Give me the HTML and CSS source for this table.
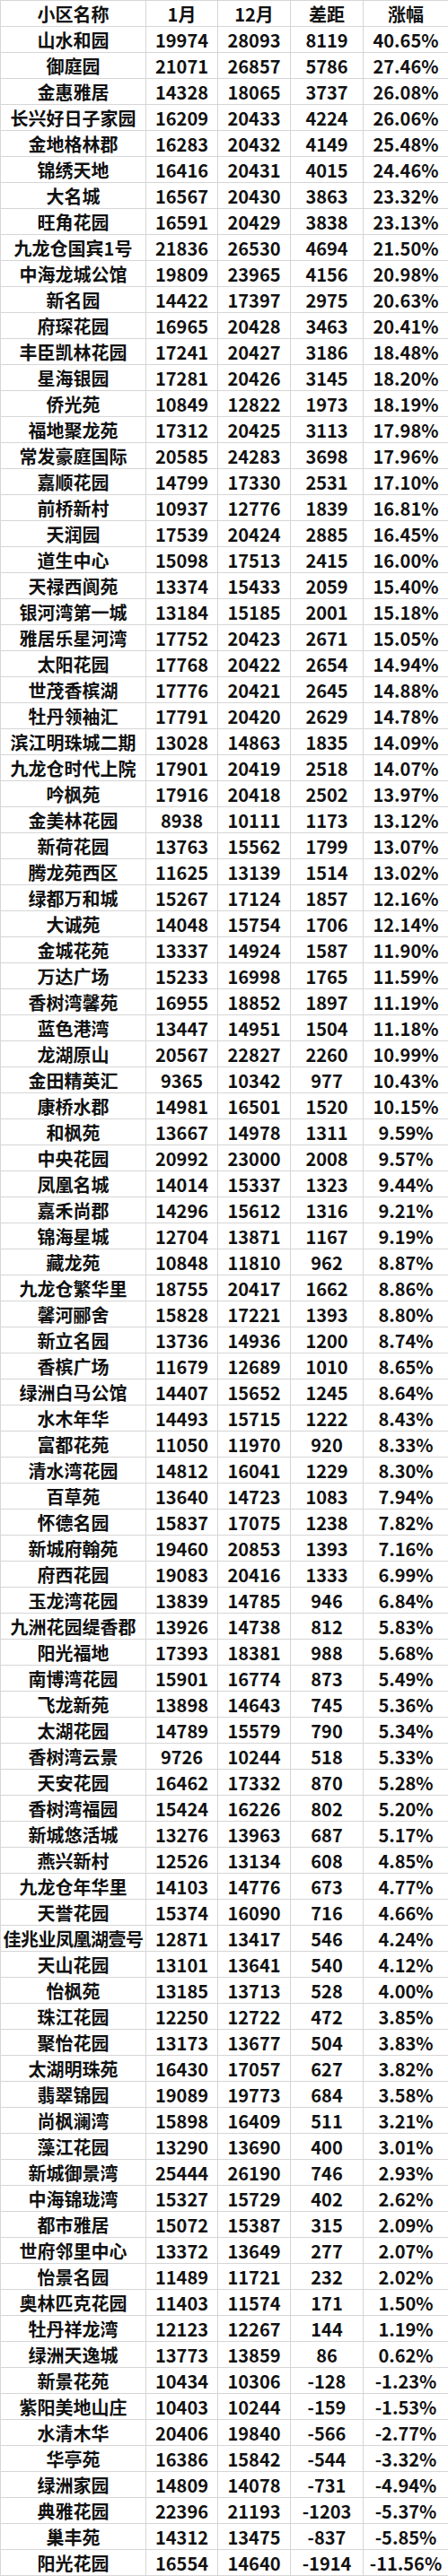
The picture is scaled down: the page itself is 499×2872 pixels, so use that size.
FILE: index.html
```html
<!DOCTYPE html>
<html lang="zh-CN">
<head>
<meta charset="utf-8">
<title>小区房价涨幅</title>
<link rel="stylesheet" href="styles.css">
</head>
<body>
<table class="sheet">
<colgroup>
<col class="c-name"><col class="c-num"><col class="c-num2"><col class="c-diff"><col class="c-pct">
</colgroup>
<thead>
<tr><th>小区名称</th><th>1月</th><th>12月</th><th>差距</th><th>涨幅</th></tr>
</thead>
<tbody>
<tr><td>山水和园</td><td>19974</td><td>28093</td><td>8119</td><td>40.65%</td></tr>
<tr><td>御庭园</td><td>21071</td><td>26857</td><td>5786</td><td>27.46%</td></tr>
<tr><td>金惠雅居</td><td>14328</td><td>18065</td><td>3737</td><td>26.08%</td></tr>
<tr><td>长兴好日子家园</td><td>16209</td><td>20433</td><td>4224</td><td>26.06%</td></tr>
<tr><td>金地格林郡</td><td>16283</td><td>20432</td><td>4149</td><td>25.48%</td></tr>
<tr><td>锦绣天地</td><td>16416</td><td>20431</td><td>4015</td><td>24.46%</td></tr>
<tr><td>大名城</td><td>16567</td><td>20430</td><td>3863</td><td>23.32%</td></tr>
<tr><td>旺角花园</td><td>16591</td><td>20429</td><td>3838</td><td>23.13%</td></tr>
<tr><td>九龙仓国宾1号</td><td>21836</td><td>26530</td><td>4694</td><td>21.50%</td></tr>
<tr><td>中海龙城公馆</td><td>19809</td><td>23965</td><td>4156</td><td>20.98%</td></tr>
<tr><td>新名园</td><td>14422</td><td>17397</td><td>2975</td><td>20.63%</td></tr>
<tr><td>府琛花园</td><td>16965</td><td>20428</td><td>3463</td><td>20.41%</td></tr>
<tr><td>丰臣凯林花园</td><td>17241</td><td>20427</td><td>3186</td><td>18.48%</td></tr>
<tr><td>星海银园</td><td>17281</td><td>20426</td><td>3145</td><td>18.20%</td></tr>
<tr><td>侨光苑</td><td>10849</td><td>12822</td><td>1973</td><td>18.19%</td></tr>
<tr><td>福地聚龙苑</td><td>17312</td><td>20425</td><td>3113</td><td>17.98%</td></tr>
<tr><td>常发豪庭国际</td><td>20585</td><td>24283</td><td>3698</td><td>17.96%</td></tr>
<tr><td>嘉顺花园</td><td>14799</td><td>17330</td><td>2531</td><td>17.10%</td></tr>
<tr><td>前桥新村</td><td>10937</td><td>12776</td><td>1839</td><td>16.81%</td></tr>
<tr><td>天润园</td><td>17539</td><td>20424</td><td>2885</td><td>16.45%</td></tr>
<tr><td>道生中心</td><td>15098</td><td>17513</td><td>2415</td><td>16.00%</td></tr>
<tr><td>天禄西阆苑</td><td>13374</td><td>15433</td><td>2059</td><td>15.40%</td></tr>
<tr><td>银河湾第一城</td><td>13184</td><td>15185</td><td>2001</td><td>15.18%</td></tr>
<tr><td>雅居乐星河湾</td><td>17752</td><td>20423</td><td>2671</td><td>15.05%</td></tr>
<tr><td>太阳花园</td><td>17768</td><td>20422</td><td>2654</td><td>14.94%</td></tr>
<tr><td>世茂香槟湖</td><td>17776</td><td>20421</td><td>2645</td><td>14.88%</td></tr>
<tr><td>牡丹领袖汇</td><td>17791</td><td>20420</td><td>2629</td><td>14.78%</td></tr>
<tr><td>滨江明珠城二期</td><td>13028</td><td>14863</td><td>1835</td><td>14.09%</td></tr>
<tr><td>九龙仓时代上院</td><td>17901</td><td>20419</td><td>2518</td><td>14.07%</td></tr>
<tr><td>吟枫苑</td><td>17916</td><td>20418</td><td>2502</td><td>13.97%</td></tr>
<tr><td>金美林花园</td><td>8938</td><td>10111</td><td>1173</td><td>13.12%</td></tr>
<tr><td>新荷花园</td><td>13763</td><td>15562</td><td>1799</td><td>13.07%</td></tr>
<tr><td>腾龙苑西区</td><td>11625</td><td>13139</td><td>1514</td><td>13.02%</td></tr>
<tr><td>绿都万和城</td><td>15267</td><td>17124</td><td>1857</td><td>12.16%</td></tr>
<tr><td>大诚苑</td><td>14048</td><td>15754</td><td>1706</td><td>12.14%</td></tr>
<tr><td>金城花苑</td><td>13337</td><td>14924</td><td>1587</td><td>11.90%</td></tr>
<tr><td>万达广场</td><td>15233</td><td>16998</td><td>1765</td><td>11.59%</td></tr>
<tr><td>香树湾馨苑</td><td>16955</td><td>18852</td><td>1897</td><td>11.19%</td></tr>
<tr><td>蓝色港湾</td><td>13447</td><td>14951</td><td>1504</td><td>11.18%</td></tr>
<tr><td>龙湖原山</td><td>20567</td><td>22827</td><td>2260</td><td>10.99%</td></tr>
<tr><td>金田精英汇</td><td>9365</td><td>10342</td><td>977</td><td>10.43%</td></tr>
<tr><td>康桥水郡</td><td>14981</td><td>16501</td><td>1520</td><td>10.15%</td></tr>
<tr><td>和枫苑</td><td>13667</td><td>14978</td><td>1311</td><td>9.59%</td></tr>
<tr><td>中央花园</td><td>20992</td><td>23000</td><td>2008</td><td>9.57%</td></tr>
<tr><td>凤凰名城</td><td>14014</td><td>15337</td><td>1323</td><td>9.44%</td></tr>
<tr><td>嘉禾尚郡</td><td>14296</td><td>15612</td><td>1316</td><td>9.21%</td></tr>
<tr><td>锦海星城</td><td>12704</td><td>13871</td><td>1167</td><td>9.19%</td></tr>
<tr><td>藏龙苑</td><td>10848</td><td>11810</td><td>962</td><td>8.87%</td></tr>
<tr><td>九龙仓繁华里</td><td>18755</td><td>20417</td><td>1662</td><td>8.86%</td></tr>
<tr><td>馨河郦舍</td><td>15828</td><td>17221</td><td>1393</td><td>8.80%</td></tr>
<tr><td>新立名园</td><td>13736</td><td>14936</td><td>1200</td><td>8.74%</td></tr>
<tr><td>香槟广场</td><td>11679</td><td>12689</td><td>1010</td><td>8.65%</td></tr>
<tr><td>绿洲白马公馆</td><td>14407</td><td>15652</td><td>1245</td><td>8.64%</td></tr>
<tr><td>水木年华</td><td>14493</td><td>15715</td><td>1222</td><td>8.43%</td></tr>
<tr><td>富都花苑</td><td>11050</td><td>11970</td><td>920</td><td>8.33%</td></tr>
<tr><td>清水湾花园</td><td>14812</td><td>16041</td><td>1229</td><td>8.30%</td></tr>
<tr><td>百草苑</td><td>13640</td><td>14723</td><td>1083</td><td>7.94%</td></tr>
<tr><td>怀德名园</td><td>15837</td><td>17075</td><td>1238</td><td>7.82%</td></tr>
<tr><td>新城府翰苑</td><td>19460</td><td>20853</td><td>1393</td><td>7.16%</td></tr>
<tr><td>府西花园</td><td>19083</td><td>20416</td><td>1333</td><td>6.99%</td></tr>
<tr><td>玉龙湾花园</td><td>13839</td><td>14785</td><td>946</td><td>6.84%</td></tr>
<tr><td>九洲花园缇香郡</td><td>13926</td><td>14738</td><td>812</td><td>5.83%</td></tr>
<tr><td>阳光福地</td><td>17393</td><td>18381</td><td>988</td><td>5.68%</td></tr>
<tr><td>南博湾花园</td><td>15901</td><td>16774</td><td>873</td><td>5.49%</td></tr>
<tr><td>飞龙新苑</td><td>13898</td><td>14643</td><td>745</td><td>5.36%</td></tr>
<tr><td>太湖花园</td><td>14789</td><td>15579</td><td>790</td><td>5.34%</td></tr>
<tr><td>香树湾云景</td><td>9726</td><td>10244</td><td>518</td><td>5.33%</td></tr>
<tr><td>天安花园</td><td>16462</td><td>17332</td><td>870</td><td>5.28%</td></tr>
<tr><td>香树湾福园</td><td>15424</td><td>16226</td><td>802</td><td>5.20%</td></tr>
<tr><td>新城悠活城</td><td>13276</td><td>13963</td><td>687</td><td>5.17%</td></tr>
<tr><td>燕兴新村</td><td>12526</td><td>13134</td><td>608</td><td>4.85%</td></tr>
<tr><td>九龙仓年华里</td><td>14103</td><td>14776</td><td>673</td><td>4.77%</td></tr>
<tr><td>天誉花园</td><td>15374</td><td>16090</td><td>716</td><td>4.66%</td></tr>
<tr><td class="tight">佳兆业凤凰湖壹号</td><td>12871</td><td>13417</td><td>546</td><td>4.24%</td></tr>
<tr><td>天山花园</td><td>13101</td><td>13641</td><td>540</td><td>4.12%</td></tr>
<tr><td>怡枫苑</td><td>13185</td><td>13713</td><td>528</td><td>4.00%</td></tr>
<tr><td>珠江花园</td><td>12250</td><td>12722</td><td>472</td><td>3.85%</td></tr>
<tr><td>聚怡花园</td><td>13173</td><td>13677</td><td>504</td><td>3.83%</td></tr>
<tr><td>太湖明珠苑</td><td>16430</td><td>17057</td><td>627</td><td>3.82%</td></tr>
<tr><td>翡翠锦园</td><td>19089</td><td>19773</td><td>684</td><td>3.58%</td></tr>
<tr><td>尚枫澜湾</td><td>15898</td><td>16409</td><td>511</td><td>3.21%</td></tr>
<tr><td>藻江花园</td><td>13290</td><td>13690</td><td>400</td><td>3.01%</td></tr>
<tr><td>新城御景湾</td><td>25444</td><td>26190</td><td>746</td><td>2.93%</td></tr>
<tr><td>中海锦珑湾</td><td>15327</td><td>15729</td><td>402</td><td>2.62%</td></tr>
<tr><td>都市雅居</td><td>15072</td><td>15387</td><td>315</td><td>2.09%</td></tr>
<tr><td>世府邻里中心</td><td>13372</td><td>13649</td><td>277</td><td>2.07%</td></tr>
<tr><td>怡景名园</td><td>11489</td><td>11721</td><td>232</td><td>2.02%</td></tr>
<tr><td>奥林匹克花园</td><td>11403</td><td>11574</td><td>171</td><td>1.50%</td></tr>
<tr><td>牡丹祥龙湾</td><td>12123</td><td>12267</td><td>144</td><td>1.19%</td></tr>
<tr><td>绿洲天逸城</td><td>13773</td><td>13859</td><td>86</td><td>0.62%</td></tr>
<tr><td>新景花苑</td><td>10434</td><td>10306</td><td>-128</td><td>-1.23%</td></tr>
<tr><td>紫阳美地山庄</td><td>10403</td><td>10244</td><td>-159</td><td>-1.53%</td></tr>
<tr><td>水清木华</td><td>20406</td><td>19840</td><td>-566</td><td>-2.77%</td></tr>
<tr><td>华亭苑</td><td>16386</td><td>15842</td><td>-544</td><td>-3.32%</td></tr>
<tr><td>绿洲家园</td><td>14809</td><td>14078</td><td>-731</td><td>-4.94%</td></tr>
<tr><td>典雅花园</td><td>22396</td><td>21193</td><td>-1203</td><td>-5.37%</td></tr>
<tr><td>巢丰苑</td><td>14312</td><td>13475</td><td>-837</td><td>-5.85%</td></tr>
<tr><td>阳光花园</td><td>16554</td><td>14640</td><td>-1914</td><td>-11.56%</td></tr>
</tbody>
</table>
</body>
</html>
```

FILE: styles.css
```css
html, body {
  margin: 0;
  padding: 0;
  background: #ffffff;
}

.sheet {
  width: 499px;
  table-layout: fixed;
  border-collapse: collapse;
  font-family: "Noto Sans CJK SC", "Noto Sans", sans-serif;
  font-weight: 700;
  font-size: 20px;
  color: #111111;
}

.c-name { width: 162px; }
.c-num { width: 80px; }
.c-num2 { width: 81px; }
.c-diff { width: 81px; }
.c-pct { width: 95px; }

.sheet tr {
  height: 29px;
}

.sheet th,
.sheet td {
  padding: 0;
  border: 1px solid #d6d6d6;
  text-align: center;
  vertical-align: middle;
  line-height: 27px;
  white-space: nowrap;
  overflow: hidden;
  font-weight: 700;
}

.sheet td.tight {
  letter-spacing: -0.5px;
}
```
